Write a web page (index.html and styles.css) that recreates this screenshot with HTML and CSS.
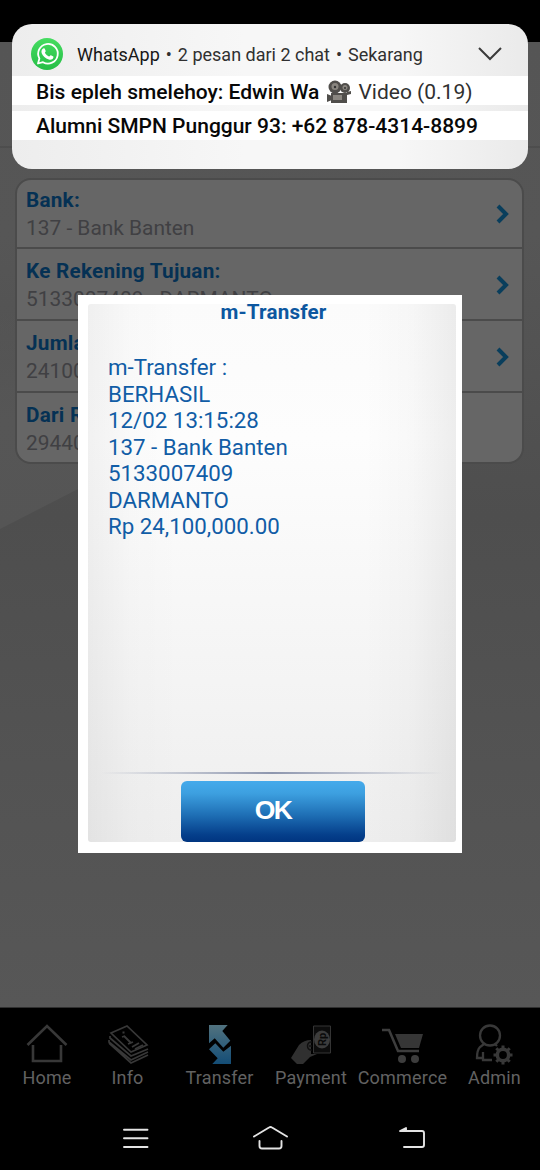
FILE: index.html
```html
<!DOCTYPE html>
<html lang="id">
<head>
<meta charset="utf-8">
<title>m-Transfer</title>
<link rel="stylesheet" href="styles.css">
</head>
<body>
<div class="phone">
  <div class="status"></div>
  <main class="screen">
    <svg class="facets" viewBox="0 0 540 966" aria-hidden="true">
      <defs><linearGradient id="facet" x2="0" y2="1"><stop stop-color="#585858" stop-opacity="0"/><stop offset=".5" stop-color="#565656"/><stop offset="1" stop-color="#555"/></linearGradient></defs>
      <path d="M0 270H78V447L0 487Z" fill="url(#facet)"/>
      <path d="M0 105H540" stroke="#474747" stroke-width="1"/>
    </svg>
    <section class="form">
      <div class="row"><div><b>Bank:</b><p>137 - Bank Banten</p></div><svg class="chev" viewBox="0 0 13 20"><path d="M2 2l8 8-8 8"/></svg></div>
      <div class="row"><div><b>Ke Rekening Tujuan:</b><p>5133007409 - DARMANTO</p></div><svg class="chev" viewBox="0 0 13 20"><path d="M2 2l8 8-8 8"/></svg></div>
      <div class="row"><div><b>Jumla</b><p>24100</p></div><svg class="chev" viewBox="0 0 13 20"><path d="M2 2l8 8-8 8"/></svg></div>
      <div class="row"><div><b>Dari R</b><p>29440</p></div></div>
    </section>
  </main>
  <nav class="tabs">
    <div class="tab home"><svg viewBox="0 0 44 42" class="line"><path d="M2.500 22L22 3l19.500 19M8 22v16h28V22" stroke-width="2.600"/></svg><span>Home</span></div>
    <div class="tab info"><svg viewBox="0 0 44 42" class="line"><path d="M5 10L21 3l20 19-16 7Z" stroke-width="1.700"/><path d="M4 13v2l21 18 17-7M3 17v2l22 18 17-8M3 20l22 20 17-8" stroke-width="1.700"/><path d="M16.500 9.500h2M18 13l7 7m-3 1l5-2M16 14l3-1M26 24l7-4m-4 6l8-4" stroke-width="1.800"/></svg><span>Info</span></div>
    <div class="tab transfer"><svg viewBox="0 0 44 42"><defs><linearGradient id="blue" x1="0" y1="0" x2="0" y2="42" gradientUnits="userSpaceOnUse"><stop stop-color="#54747f"/><stop offset="1" stop-color="#124c76"/></linearGradient></defs><path fill="url(#blue)" d="M11 2h18.700l-5.400 6 8 9.700-7 7-8.600-9.400-5.700 5ZM33 22.700V41H14.300l5.400-5.700-8.700-9 6.300-6 8 8.400Z"/></svg><span>Transfer</span></div>
    <div class="tab payment"><svg viewBox="0 0 44 42"><path fill="#303030" d="M2 35l8-13q5-5 12-5v14h6l-7 3-7 7H8Z"/><path d="M24.500 3h17v27h-17Z" stroke="#343434" fill="#0c0c0c"/><ellipse cx="33" cy="16.500" rx="8" ry="9" fill="#3c3c3c"/><path d="M23 19c-6-1-6 9 0 8m-3-4h3" fill="none" stroke="#101010" stroke-width="1.500"/><text x="-23" y="37" transform="rotate(-90)" class="rp">Rp</text></svg><span>Payment</span></div>
    <div class="tab commerce"><svg viewBox="0 0 44 42"><path d="M1 7h7l9 21h21" fill="none" stroke="#3d3d3d" stroke-width="2.500"/><path fill="#363636" d="M14 11h28l-4 14H20Z"/><circle cx="21" cy="36" r="4" fill="#3d3d3d"/><circle cx="34" cy="36" r="4" fill="#3d3d3d"/></svg><span>Commerce</span></div>
    <div class="tab admin"><svg viewBox="1 0 44 42" class="line"><circle cx="18" cy="12.500" r="10" stroke-width="2.300"/><path d="M12 21l-4 3q-3 3-3 11h6v-6m0 6v2h9M23 21l2 2" stroke-width="2.300"/><circle cx="31" cy="32" r="5.700" stroke-width="3.600"/><path d="M31 22.500v4M31 37.500v4M21.500 32h4M36.500 32h4M24.300 25.300l3 3M34.700 35.700l3 3M37.700 25.300l-3 3M27.300 35.700l-3 3" stroke-width="3"/></svg><span>Admin</span></div>
  </nav>
  <div class="system">
    <svg viewBox="0 0 540 58"><g fill="none" stroke="#e4e4e4" stroke-width="1.900" stroke-linecap="round" stroke-linejoin="round"><path d="M124 17.700h23.500M124 26.300h23.500M124 35h23.500"/><path d="M254 24.500l15-9q1.500-1 3 0l15 9M259.500 29v5q0 2.500 2.500 2.500h17q2.500 0 2.500-2.500v-5M404 35h18q2 0 2-2V21q0-2-2-2h-22l6-3v3"/></g></svg>
  </div>
</div>
<section class="dialog">
  <div class="sheet">
    <h1>m-Transfer</h1>
    <div class="result">m-Transfer :<br>BERHASIL<br>12/02 13:15:28<br>137 - Bank Banten<br>5133007409<br>DARMANTO<br>Rp 24,100,000.00</div>
    <div class="rule"></div>
    <button class="ok">OK</button>
  </div>
</section>
<aside class="notice">
  <header class="app">
    <svg class="wa" viewBox="0 0 32 32"><defs><linearGradient id="green" x2="0" y2="1"><stop stop-color="#46dc61"/><stop offset="1" stop-color="#25be46"/></linearGradient></defs><circle cx="16" cy="16" r="16" fill="url(#green)"/><path d="M7 25.500l1.400-5A9.800 9.800 0 1 1 12 24.200Z" fill="none" stroke="#fff" stroke-width="1.800" stroke-linejoin="round"/><path d="M12.300 10.500c.8-.4 1.400-.2 1.600.4l.8 2c.3.700-1 1.300-.8 1.900 1 1.900 2.300 3 4.100 3.700.6.200 1.100-1.500 1.900-1.200l2 .9c.7.400.6.700.4 1.500-.7 2-2.800 2.300-4.500 1.700-3.500-1-6-3.400-7.100-6.200-.6-1.800-.1-3.800 1.600-4.700Z" fill="#fff"/></svg>
    <strong>WhatsApp</strong><i>•</i><span>2 pesan dari 2 chat</span><i>•</i><span>Sekarang</span>
    <svg class="down" viewBox="0 0 24 14"><path d="M1 1l11 11L23 1"/></svg>
  </header>
  <div class="message"><b>Bis epleh smelehoy: Edwin Wa</b>
    <svg class="camera" viewBox="0 0 25 24"><g fill="#504e4b"><circle cx="9" cy="7" r="6.500"/><circle cx="19" cy="8" r="5"/><path d="M5 13h16v10H5zM1 14l5 2v4l-5 2ZM21 12l4-1v3l-4 1Z"/></g><g fill="#8a8680"><circle cx="9" cy="6.500" r="3.500"/><circle cx="19" cy="7.500" r="2.500"/><path d="M7 15h9v5H7z"/></g><circle cx="9" cy="7" r="1.200" fill="#333"/><circle cx="19" cy="8" r="1" fill="#333"/></svg>
    <span>Video (0.19)</span></div>
  <div class="message second"><b>Alumni SMPN Punggur 93: +62 878-4314-8899</b></div>
</aside>
</body>
</html>
```

FILE: styles.css
```css
* { box-sizing: border-box; }
body { margin: 0; background: #000; font-family: Roboto, sans-serif; width: 540px; height: 1170px; overflow: hidden; position: relative; }
p, h1 { margin: 0; }
.phone { display: flex; flex-direction: column; height: 1170px; }
.status { height: 42px; flex: none; }
.screen { position: relative; height: 966px; flex: none; padding: 136px 16px 0 15px; background: linear-gradient(#555 0%, #565656 20%, #4e4e4e 49%, #535353 75%, #575757 100%); border-bottom: 1px solid #303030; }
.facets { position: absolute; inset: 0; width: 540px; height: 966px; }
.form { position: relative; height: 286px; border: 2px solid #4b4b4b; border-radius: 16px; background: #666; overflow: hidden; }
.row { height: 72px; padding: 9px 13px 0 9px; display: flex; justify-content: space-between; border-bottom: 2px solid #4b4b4b; font-size: 20.900px; line-height: 28px; color: #404043; white-space: nowrap; }
.row:first-child { height: 69px; padding-top: 7px; }
.row:last-child { border: 0; }
.row b { display: block; color: #053154; font-size: 20.700px; letter-spacing: .25px; font-weight: 700; line-height: 27px; }
.row p { line-height: 29px; }
.chev { width: 13px; height: 20px; margin-top: 17px; fill: none; stroke: #093e5c; stroke-width: 4; }
.tabs { height: 98px; flex: none; display: grid; grid-template-columns: 94px 67px 117px 66px 117px 67px; justify-content: start; color: #626262; font-size: 18px; line-height: 22px; letter-spacing: .2px; }
.tab { display: flex; flex-direction: column; align-items: center; padding-top: 15px; }
.tab svg { width: 44px; height: 42px; flex: none; margin-bottom: 2px; }
.tab span { white-space: nowrap; }
.line { fill: none; stroke: #383838; }
.rp { fill: #0a0a0a; font: 700 11px Roboto, sans-serif; letter-spacing: 0; }
.system { height: 64px; padding-top: 6px; }
.system svg { display: block; width: 540px; height: 58px; }
.dialog { position: absolute; left: 78px; top: 295px; width: 384px; height: 558px; padding: 9px 6px 11px 10px; background: #fff; }
.sheet { width: 368px; height: 538px; display: flex; flex-direction: column; align-items: center; border-radius: 3px; background: linear-gradient(90deg, #0000000c 0%, #00000003 12%, transparent 25%, transparent 75%, #00000005 88%, #00000010 100%), linear-gradient(#fbfbfb 0%, #fdfdfd 25%, #f8f8f8 50%, #eee 100%); }
.dialog h1 { font-size: 20.600px; letter-spacing: .2px; line-height: 17px; height: 47px; color: #0c57a0; padding-left: 3px; font-weight: 700; }
.result { width: 100%; height: 421px; padding: 3px 20px; font-size: 22.300px; line-height: 26.500px; color: #115da6; }
.rule { width: 342px; height: 2px; flex: none; background: linear-gradient(90deg, transparent, #8d96ae 50%, transparent); }
.ok { width: 184px; height: 61px; margin: 7px 0 0 1px; flex: none; padding: 0 0 3px 1px; border: 0; border-radius: 6px; background: linear-gradient(#45aaeb 0%, #3da0e0 20%, #1f70b6 55%, #053f8b 88%, #003580 100%); color: #fff; font: 700 26.500px "Liberation Sans", sans-serif; letter-spacing: -1.500px; }
.notice { position: absolute; left: 12px; top: 24px; width: 516px; height: 145px; border-radius: 20px; overflow: hidden; background: linear-gradient(90deg, #ededed, #f7f7f7 45%, #f7f7f7 75%, #eaeaea); color: #303030; }
.app { height: 52px; padding: 9px 26px 1px 19px; display: flex; align-items: center; font-size: 18px; }
.wa { width: 32px; height: 32px; margin-right: 14px; }
.app strong { font-weight: 400; color: #171717; }
.app i { width: 18px; text-align: center; font-style: normal; }
.down { width: 24px; height: 14px; margin-left: auto; fill: none; stroke: #3b3b3b; stroke-width: 2; }
.message { height: 29px; padding: 2px 24px 0; display: flex; align-items: center; gap: 7px; background: #fff; font-size: 21px; white-space: nowrap; }
.message b { color: #080808; font-weight: 500; }
.camera { width: 25px; height: 24px; }
.second { margin-top: 6px; padding-top: 1px; }
```
